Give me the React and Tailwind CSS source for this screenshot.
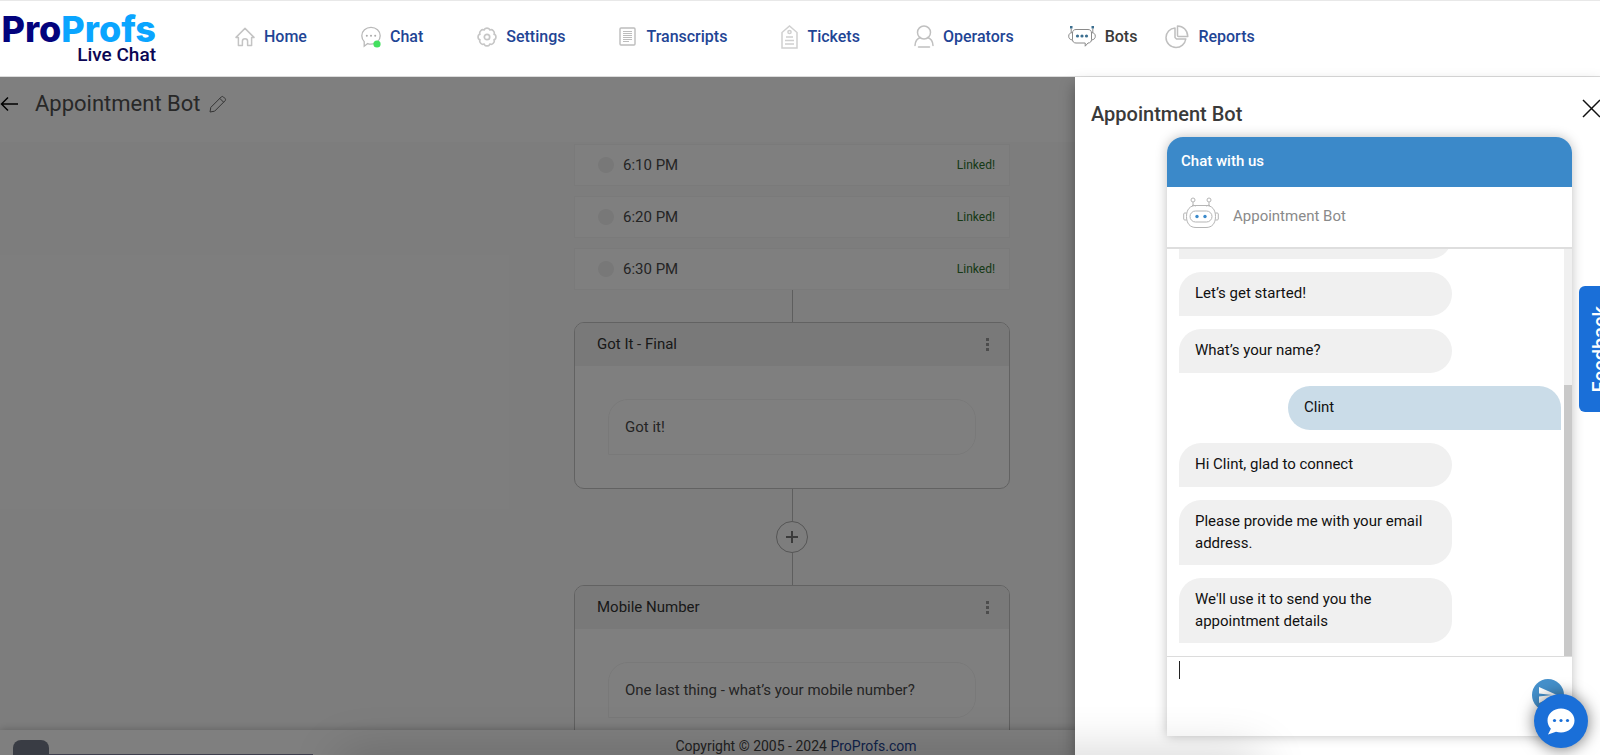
import React, { useState } from "react";

const HomeIcon = () => (
  <svg width="20" height="20" viewBox="0 0 20 20" fill="none" stroke="#c4c4c4" strokeWidth="1.5" strokeLinejoin="round">
    <path d="M1 10.4 10 1.4l9 9h-2.4v8.1h-4v-4.3c0-1.6-1.1-2.5-2.6-2.5s-2.6.9-2.6 2.5v4.3h-4v-8.1H1Z" />
  </svg>
);

const ChatIcon = () => (
  <svg width="20" height="22" viewBox="0 0 20 22">
    <path
      d="M3.2 20.2v-4.6C1.7 14 .8 12 .8 9.8.8 4.9 4.9 1.4 10 1.4s9.2 3.5 9.2 8.4-4.1 8.4-9.2 8.4c-1.2 0-2.3-.2-3.3-.6L3.2 20.2Z"
      fill="none"
      stroke="#b9b9b9"
      strokeWidth="1.3"
    />
    <g fill="#aaaaaa">
      <circle cx="5.8" cy="9.7" r="1" />
      <circle cx="10" cy="9.7" r="1" />
      <circle cx="14.2" cy="9.7" r="1" />
    </g>
    <circle cx="16" cy="18" r="3.6" fill="#43e05f" />
  </svg>
);

const SettingsIcon = () => (
  <svg width="20" height="20" viewBox="0 0 20 20" fill="none" stroke="#c6c6c6" strokeWidth="1.7" strokeLinejoin="round">
    <path d="M7.6 2.1c.7-1.4 4.100-1.400 4.800 0l.4.9 1-.3c1.500-.4 3.900 2 3.500 3.500l-.3 1 .9.400c1.400.700 1.400 4.100 0 4.800l-.9.400.3 1c.4 1.500-2 3.900-3.500 3.500l-1-.3-.4.900c-.7 1.400-4.100 1.400-4.800 0l-.4-.9-1 .3c-1.500.4-3.900-2-3.500-3.500l.3-1-.9-.4c-1.400-.7-1.400-4.100 0-4.800l.9-.4-.3-1c-.4-1.500 2-3.900 3.500-3.500l1 .3.4-.9Z" />
    <circle cx="10" cy="10" r="2.7" />
  </svg>
);

const TranscriptsIcon = () => (
  <svg width="18" height="19" viewBox="0 0 18 19" fill="none" stroke="#bdbdbd">
    <rect x="1" y="1" width="15" height="17" rx="1" strokeWidth="1.4" />
    <path d="M4 4.500h9M4 6.500h9M4 8.500h9M4 10.500h9M4 12.500h9M4 14.500h6" strokeWidth="1.1" />
  </svg>
);

const TicketsIcon = () => (
  <svg width="17" height="24" viewBox="0 0 17 24" fill="none" stroke="#d0d0d0" strokeWidth="1.5">
    <path d="M1 23V7.500L8.500 1 16 7.500V23H1Z" />
    <circle cx="8.500" cy="7" r="1.600" />
    <path d="M5 12h7M4 15.500h9M4 19h9" />
  </svg>
);

const OperatorsIcon = () => (
  <svg width="20" height="23" viewBox="0 0 20 23" fill="none" stroke="#c0c0c0" strokeWidth="1.5" strokeLinecap="round">
    <circle cx="10" cy="7.500" r="6.500" />
    <path d="M1 20.500c.2-4 2.300-7 5.500-8M19 20.500c-.2-4-2.300-7-5.500-8M4.500 22h11" />
  </svg>
);

const BotsIcon = () => (
  <svg width="28" height="22" viewBox="0 0 28 22" fill="none" stroke="#8a8a8a">
    <path d="M8 3.500h12c2.200 0 3.500 1.300 3.500 3.500v6.500c0 2.200-1.300 3.500-3.500 3.500l-2.800 3.200V17H8c-2.200 0-3.500-1.300-3.500-3.500V7c0-2.200 1.300-3.500 3.500-3.500Z" />
    <path d="M4.500 6.500C2 6.700.7 8 .7 10.200s1.300 3.500 3.800 3.800M23.500 6.500c2.500.2 3.800 1.500 3.800 3.700s-1.300 3.500-3.800 3.800M3.200 6.500v-4M24.800 6.500v-4" />
    <g fill="#3c6f90" stroke="none">
      <rect x="2" y="0" width="2.500" height="2.500" />
      <rect x="23.500" y="0" width="2.500" height="2.500" />
      <circle cx="9.500" cy="10" r="1.600" />
      <circle cx="14" cy="10" r="1.600" />
      <circle cx="18.500" cy="10" r="1.600" />
    </g>
  </svg>
);

const ReportsIcon = () => (
  <svg width="24" height="24" viewBox="0 0 24 24" fill="none" stroke="#bfbfbf" strokeWidth="1.5" strokeLinejoin="round">
    <path d="M10 3C5 3.300 1 7.300 1 12.500 1 18 5.400 22.500 11 22.500c5 0 9-3.500 9.800-8.500H11.500L10 12.500V3Z" />
    <path d="M12.500 1c5.500 0 10 4 10.300 10.500h-9.300c-.6 0-1-.4-1-1V1Z" />
  </svg>
);

const BotAvatar = () => (
  <svg width="36" height="32" viewBox="0 0 36 32" fill="none" stroke="#b5b5b5">
    <circle cx="10" cy="3" r="2" />
    <circle cx="26" cy="3" r="2" />
    <path d="M10 5v4M26 5v4M8 10l2-2 3 1M28 10l-2-2-3 1" />
    <path d="M13 8.500h10c6 0 9.500 4 9.500 11s-3.500 11-9.500 11H13c-6 0-9.500-4-9.500-11s3.500-11 9.500-11Z" />
    <rect x="7" y="14" width="22" height="11" rx="5.500" />
    <path d="M3.500 16H1.800c-.7 0-1.100.4-1.100 1v5c0 .6.4 1 1.100 1h1.700M32.500 16h1.700c.7 0 1.100.4 1.100 1v5c0 .6-.4 1-1.100 1h-1.700" />
    <circle cx="14" cy="19.500" r="1.700" fill="#3b8acb" stroke="none" />
    <circle cx="22" cy="19.500" r="1.700" fill="#3b8acb" stroke="none" />
  </svg>
);

const navItems = [
  { label: "Home", icon: HomeIcon },
  { label: "Chat", icon: ChatIcon },
  { label: "Settings", icon: SettingsIcon },
  { label: "Transcripts", icon: TranscriptsIcon },
  { label: "Tickets", icon: TicketsIcon },
  { label: "Operators", icon: OperatorsIcon },
];

const slots = ["6:10 PM", "6:20 PM", "6:30 PM"];

const messages = [
  { id: 1, text: "", from: "bot" },
  { id: 2, text: "Let’s get started!", from: "bot" },
  { id: 3, text: "What’s your name?", from: "bot" },
  { id: 4, text: "Clint", from: "user" },
  { id: 5, text: "Hi Clint, glad to connect", from: "bot" },
  { id: 6, text: "Please provide me with your email address.", from: "bot" },
  { id: 7, text: "We'll use it to send you the appointment details", from: "bot" },
];

const NavLink = ({ label, icon: Icon, active }) => (
  <a
    href="#"
    className={`flex items-center gap-[9px] text-base font-medium ${
      active ? "text-[#3a3a3a]" : "text-[#1f4595]"
    }`}
  >
    <Icon />
    {label}
  </a>
);

const Header = () => (
  <header className="flex h-[77px] shrink-0 items-center border-y border-t-[#e8e8e8] border-b-[#dcdcdc] bg-white">
    <a href="#" className="-ml-1 flex w-[160px] shrink-0 flex-col items-end">
      <span className="font-[Inter] text-[36px] leading-[32px] font-extrabold text-[#03037d]">
        Pro<span className="text-[#0aa5ff]">Profs</span>
      </span>
      <span className="text-[19px] leading-5 font-medium text-[#0b0654]">Live Chat</span>
    </a>
    <nav className="ml-[79px] flex items-center gap-7 pb-1">
      <div className="flex items-center gap-[54px]">
        {navItems.map((item) => (
          <NavLink key={item.label} {...item} />
        ))}
        <NavLink label="Bots" icon={BotsIcon} active />
      </div>
      <NavLink label="Reports" icon={ReportsIcon} />
    </nav>
  </header>
);

const Connector = () => <div className="h-8 w-px bg-[#bdbdbd]" />;

const FlowCard = ({ title, text }) => (
  <section className="w-full shrink-0 overflow-hidden rounded-[10px] border border-[#c4c4c4] bg-white">
    <div className="flex h-[43px] items-center justify-between bg-[#f2f2f2] pr-4 pl-[22px]">
      <h2 className="text-[15px] text-[#333]">{title}</h2>
      <button type="button" aria-label={`${title} options`} className="flex w-3 flex-col items-center gap-[2px]">
        <span className="size-[3px] bg-[#999]" />
        <span className="size-[3px] bg-[#999]" />
        <span className="size-[3px] bg-[#999]" />
      </button>
    </div>
    <div className="px-[33px] py-[33px]">
      <p className="flex h-14 items-center rounded-[20px] rounded-bl-none border border-[#f2f2f2] px-4 text-[15px] text-[#4a4a4a]">
        {text}
      </p>
    </div>
  </section>
);

const FlowEditor = () => (
  <main className="relative flex min-h-0 flex-1 flex-col bg-white">
    <div className="flex h-[65px] shrink-0 items-center gap-4 pb-3">
      <button type="button" aria-label="Back">
        <svg width="19" height="16" viewBox="0 0 19 16" fill="none" stroke="#000" strokeWidth="1.5">
          <path d="M18 8H2M8 1.500 1.500 8 8 14.500" />
        </svg>
      </button>
      <h1 className="text-[22px] text-[#505050]">Appointment Bot</h1>
      <button type="button" aria-label="Rename bot" className="-ml-2">
        <svg width="18" height="18" viewBox="0 0 18 18" fill="none" stroke="#666" strokeLinejoin="round">
          <path d="M1 17l.8-4.600L12.300 1.900c.6-.6 1.500-.6 2.100 0l1.700 1.700c.6.6.6 1.500 0 2.100L5.600 16.200 1 17ZM10.800 3.400l3.800 3.800" />
        </svg>
      </button>
    </div>

    <div className="flex min-h-0 flex-1 flex-col overflow-hidden bg-[#fbfbfb] pt-[2px] pr-4">
      <div className="mx-auto flex w-[436px] flex-col items-center">
        <ul className="flex w-full flex-col gap-[10px]">
          {slots.map((slot) => (
            <li
              key={slot}
              className="flex h-[42px] items-center border border-[#f4f4f4] bg-white pr-[14px] pl-[23px] text-[15px] text-[#4a4a4a]"
            >
              <span className="mr-[9px] size-4 rounded-full bg-[#f0f0f0]" />
              {slot}
              <span className="ml-auto text-xs text-[#2c722c]">Linked!</span>
            </li>
          ))}
        </ul>
        <Connector />
        <FlowCard title="Got It - Final" text="Got it!" />
        <Connector />
        <button
          type="button"
          aria-label="Add step"
          className="flex size-8 shrink-0 items-center justify-center rounded-full border border-[#aaa]"
        >
          <svg width="12" height="12" viewBox="0 0 12 12" stroke="#777" strokeWidth="2">
            <path d="M6 0v12M0 6h12" />
          </svg>
        </button>
        <Connector />
        <FlowCard title="Mobile Number" text="One last thing - what’s your mobile number?" />
      </div>
    </div>

    <footer className="relative flex h-[25px] shrink-0 justify-center bg-white pt-1 pr-2 text-sm leading-6 text-[#444] shadow-[0_0_8px_rgba(0,0,0,0.25)]">
      <p>
        Copyright © 2005 - 2024{" "}
        <a href="#" className="text-[#1f4595]">
          ProProfs.com
        </a>
      </p>
      <span className="absolute bottom-0 left-[13px] h-[15px] w-9 rounded-t-lg bg-[#727988]" />
      <span className="absolute bottom-0 left-[49px] h-px w-[264px] bg-[#7c7c98]" />
    </footer>
    <div className="absolute inset-0 bg-black/50" />
  </main>
);

const Message = ({ message }) => (
  <li
    className={`min-h-[44px] w-[273px] shrink-0 rounded-[22px] px-4 pt-[10px] pb-[11px] ${
      message.from === "user"
        ? "self-end rounded-br-none bg-[#cadce8]"
        : "rounded-bl-none bg-[#f0f0f0]"
    }`}
  >
    {message.text}
  </li>
);

const ChatWidget = () => {
  const [draft, setDraft] = useState("");

  return (
    <div className="mr-7 ml-auto flex min-h-0 w-[405px] flex-1 flex-col rounded-t-2xl bg-white shadow-[0_0_12px_rgba(0,0,0,0.25)]">
      <div className="flex h-[50px] shrink-0 items-center rounded-t-2xl bg-[#3b89c9] px-[14px] pb-[1px] text-[15px] font-medium text-white">
        Chat with us
      </div>
      <div className="flex h-[62px] shrink-0 items-center gap-[14px] border-b-2 border-[#dedede] px-4">
        <div className="pb-2">
          <BotAvatar />
        </div>
        <span className="pb-[1px] text-[15px] text-[#8a8a8a]">Appointment Bot</span>
      </div>

      <div className="flex min-h-0 flex-1">
        <ul className="flex min-w-0 flex-1 flex-col justify-end gap-[13px] overflow-hidden pr-[3px] pb-[13px] pl-3 text-[15px] leading-[22px] text-[#111]">
          {messages.map((message) => (
            <Message key={message.id} message={message} />
          ))}
        </ul>
        <div className="flex w-2 flex-col justify-end bg-[#f0f0f0]">
          <div className="h-2/3 bg-[#c9c9c9]" />
        </div>
      </div>

      <div className="relative h-20 shrink-0 border-t border-[#dcdcdc]">
        <textarea
          aria-label="Your message"
          autoFocus
          value={draft}
          onChange={(e) => setDraft(e.target.value)}
          className="block size-full resize-none px-3 py-1 text-[15px] caret-transparent outline-none"
        />
        <span className="absolute top-1 left-3 h-[18px] w-px bg-[#222]" />
        <button
          type="button"
          aria-label="Send"
          className="absolute right-2 bottom-[25px] flex size-8 items-center justify-center rounded-full bg-[#4590cb]"
        >
          <svg width="18" height="16" viewBox="0 0 18 16" fill="#fff">
            <path d="M0 0l18 8L0 16V9.500L13 8 0 6.500V0Z" />
          </svg>
        </button>
      </div>
    </div>
  );
};

const PreviewDrawer = () => (
  <aside className="absolute top-[77px] right-0 bottom-0 flex w-[525px] flex-col bg-white pb-[19px] shadow-[0_8px_14px_rgba(0,0,0,0.35)]">
    <div className="flex h-[60px] shrink-0 items-center justify-between pt-[14px] pl-4">
      <h2 className="text-xl font-medium text-[#3a3a3a]">Appointment Bot</h2>
      <button type="button" aria-label="Close preview" className="-mr-[1px] mb-3">
        <svg width="19" height="19" viewBox="0 0 19 19" stroke="#111" strokeWidth="1.5">
          <path d="M1 1l17 17M18 1 1 18" />
        </svg>
      </button>
    </div>
    <ChatWidget />
  </aside>
);

const App = () => {
  return (
    <div className="relative flex h-screen flex-col overflow-hidden bg-white font-[Roboto,sans-serif]">
      <Header />
      <FlowEditor />
      <PreviewDrawer />

      {/* shadow of the bar docked under the window */}
      <div className="pointer-events-none absolute top-full right-[340px] left-[340px] h-10 shadow-[0_0_50px_rgba(0,0,0,0.2)]" />

      <button
        type="button"
        className="absolute top-[286px] -right-[21px] flex h-[126px] w-[42px] items-center justify-center rounded-l-md bg-[#1a6fd8] text-xl font-medium text-white"
      >
        <span className="rotate-180 [writing-mode:vertical-rl]">Feedback</span>
      </button>

      <button
        type="button"
        aria-label="Open live chat"
        className="absolute right-3 bottom-[7px] flex size-[54px] items-center justify-center rounded-full bg-[#1a6fd8] shadow-[0_1px_16px_rgba(0,0,0,0.55)]"
      >
        <svg width="28" height="27" viewBox="0 0 28 27">
          <path
            d="M14 .5C6.500.5.5 5.800.5 12.500c0 3.200 1.300 6 3.400 8.200L1 26.500l8-2.700c1.600.5 3.300.7 5 .7 7.500 0 13.500-5.300 13.500-12S21.500.5 14 .5Z"
            fill="#fff"
          />
          <g fill="#1a6fd8">
            <circle cx="7.500" cy="12.500" r="1.600" />
            <circle cx="14" cy="12.500" r="1.600" />
            <circle cx="20.500" cy="12.500" r="1.600" />
          </g>
        </svg>
      </button>
    </div>
  );
};

export default App;
